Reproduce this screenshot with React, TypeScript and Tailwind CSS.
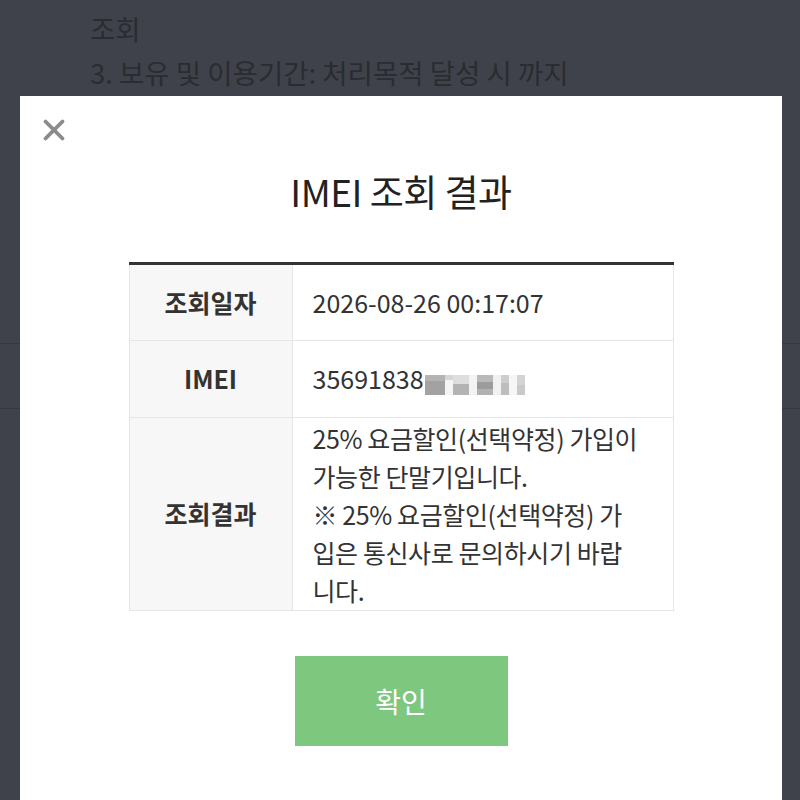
import { X } from 'lucide-react';

const font = { fontFamily: "'Noto Sans CJK KR', 'Noto Sans', sans-serif" };

function Mosaic() {
  // pixelated (masked) digits of the IMEI
  return (
    <span className="ml-[1px] inline-flex h-[20px] translate-y-[3px] align-middle">
      <span className="flex w-[20px] flex-col">
        <span className="h-[6px] bg-[#b4b4b4]" />
        <span className="h-[14px] bg-[#a2a2a2]" />
      </span>
      <span className="flex w-[8px] flex-col">
        <span className="h-[5px] bg-[#d6d6d6]" />
        <span className="h-[15px] bg-[#f4f4f4]" />
      </span>
      <span className="flex w-[16px] flex-col">
        <span className="h-[9px] bg-[#dedede]" />
        <span className="h-[11px] bg-[#b3b3b3]" />
      </span>
      <span className="w-[8px] bg-[#f3f3f3]" />
      <span className="flex w-[16px] flex-col">
        <span className="h-[7px] bg-[#b9b9b9]" />
        <span className="h-[7px] bg-[#9c9c9c]" />
        <span className="h-[6px] bg-[#b2b2b2]" />
      </span>
      <span className="w-[8px] bg-[#f1f1f1]" />
      <span className="flex w-[8px] flex-col">
        <span className="h-[8px] bg-[#cdcdcd]" />
        <span className="h-[12px] bg-[#bdbdbd]" />
      </span>
      <span className="w-[8px] bg-[#f6f6f6]" />
      <span className="flex w-[8px] flex-col">
        <span className="h-[10px] bg-[#d3d3d3]" />
        <span className="h-[10px] bg-[#c9c9c9]" />
      </span>
    </span>
  );
}

export default function App() {
  return (
    <div className="relative h-[800px] w-[800px] overflow-hidden bg-[#3f424a]" style={font}>
      {/* page behind the dimmed overlay */}
      <div className="flex flex-col pl-[90px] pt-[6px] text-[27.5px] leading-[44px] text-[#2a2c31]">
        <p>조회</p>
        <p>3. 보유 및 이용기간: 처리목적 달성 시 까지</p>
      </div>
      <div className="mt-[249px] border-t border-[#35383e]" />
      <div className="mt-[64px] border-t border-[#35383e]" />

      {/* modal */}
      <div className="absolute left-[20px] top-[96px] h-[720px] w-[762px] bg-white">
        <button className="absolute left-[17px] top-[17px] flex h-[34px] w-[34px] items-center justify-center text-[#8b8b8b]">
          <X className="h-[34px] w-[34px]" strokeWidth={2.7} />
        </button>

        <div className="flex flex-col items-center">
          <h2 className="mt-[70px] h-[50px] text-[37px] leading-[50px] font-normal tracking-[-0.5px] text-[#222]">IMEI 조회 결과</h2>

          <div className="mt-[46px] w-[545px] border-t-[3px] border-[#333]">
            <div className="grid grid-cols-[164px_1fr] border-b border-[#e6e6e6]">
              <div className="flex h-[75px] items-center justify-center border-l border-r border-[#e6e6e6] bg-[#f7f7f7] text-[25px] font-bold text-[#333]">
                조회일자
              </div>
              <div className="flex items-center border-r border-[#e6e6e6] pl-[20px] text-[25px] text-[#333]">
                2026-08-26 00:17:07
              </div>
            </div>
            <div className="grid grid-cols-[164px_1fr] border-b border-[#e6e6e6]">
              <div className="flex h-[76px] items-center justify-center border-l border-r border-[#e6e6e6] bg-[#f7f7f7] text-[25px] font-bold text-[#333]">
                IMEI
              </div>
              <div className="flex items-center border-r border-[#e6e6e6] pl-[20px] text-[25px] text-[#333]">
                <span className="whitespace-nowrap">
                  35691838
                  <Mosaic />
                </span>
              </div>
            </div>
            <div className="grid grid-cols-[164px_1fr] border-b border-[#e6e6e6]">
              <div className="flex items-center justify-center border-l border-r border-[#e6e6e6] bg-[#f7f7f7] text-[25px] font-bold text-[#333]">
                조회결과
              </div>
              <div className="flex flex-col border-r border-[#e6e6e6] py-[1px] pl-[20px] text-[25px] leading-[38px] tracking-[-0.4px] whitespace-nowrap text-[#333]">
                <span>25% 요금할인(선택약정) 가입이</span>
                <span>가능한 단말기입니다.</span>
                <span>※ 25% 요금할인(선택약정) 가</span>
                <span>입은 통신사로 문의하시기 바랍</span>
                <span>니다.</span>
              </div>
            </div>
          </div>

          <button className="mt-[45px] flex h-[90px] w-[213px] items-center justify-center bg-[#7ec77f] text-[28px] text-white">
            확인
          </button>
        </div>
      </div>
    </div>
  );
}
